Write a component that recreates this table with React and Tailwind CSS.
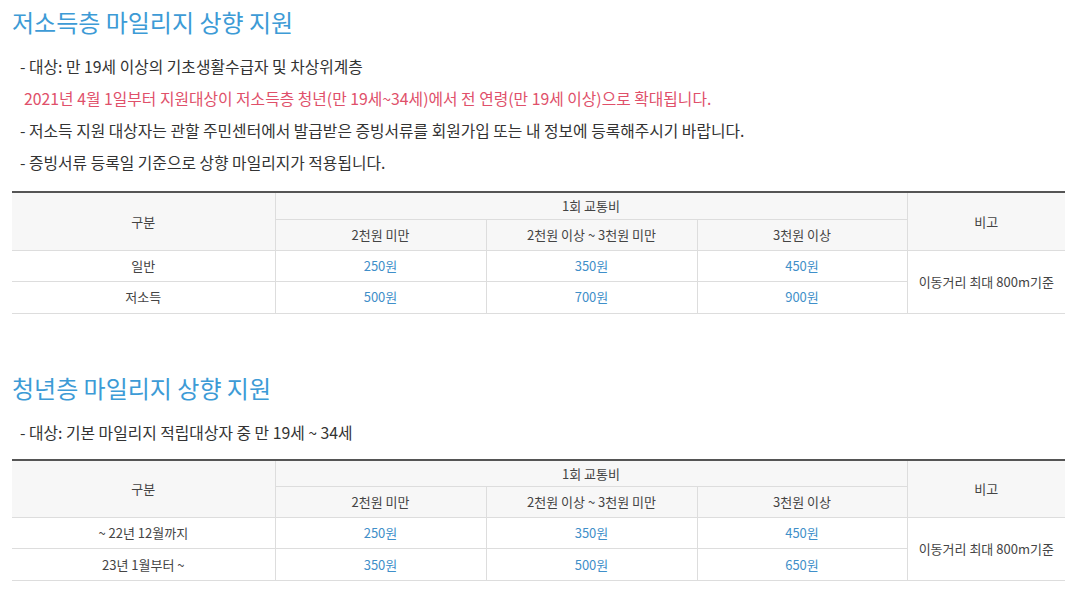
const font = { fontFamily: '"Noto Sans CJK KR", "Noto Sans", sans-serif' };

const tables = [
  {
    rows: [
      { label: '일반', values: ['250원', '350원', '450원'] },
      { label: '저소득', values: ['500원', '700원', '900원'] },
    ],
  },
  {
    rows: [
      { label: '~ 22년 12월까지', values: ['250원', '350원', '450원'] },
      { label: '23년 1월부터 ~', values: ['350원', '500원', '650원'] },
    ],
  },
];

function FareTable({ rows }) {
  const th = 'border border-[#dddddd] font-normal text-[13px] text-[#444]';
  const td = 'border border-[#dddddd] text-[13px] text-center';
  return (
    <table className="w-full table-fixed border-collapse border-t-2 border-t-[#555]">
      <colgroup>
        <col className="w-[263px]" />
        <col className="w-[211px]" />
        <col className="w-[211px]" />
        <col className="w-[210px]" />
        <col />
      </colgroup>
      <thead className="bg-[#f7f7f7]">
        <tr className="h-[27px]">
          <th rowSpan={2} className={`${th} border-l-0`}>구분</th>
          <th colSpan={3} className={th}>1회 교통비</th>
          <th rowSpan={2} className={`${th} border-r-0`}>비고</th>
        </tr>
        <tr className="h-[31px]">
          <th className={th}>2천원 미만</th>
          <th className={th}>2천원 이상 ~ 3천원 미만</th>
          <th className={th}>3천원 이상</th>
        </tr>
      </thead>
      <tbody>
        {rows.map((row, i) => (
          <tr key={row.label} className={i === 0 ? 'h-[31px]' : 'h-[32px]'}>
            <td className={`${td} border-l-0 text-[#444]`}>{row.label}</td>
            {row.values.map((v) => (
              <td key={v} className={`${td} text-[#3f8fc9]`}>{v}</td>
            ))}
            {i === 0 && (
              <td rowSpan={2} className={`${td} border-r-0 text-[#444]`}>
                이동거리 최대 800m기준
              </td>
            )}
          </tr>
        ))}
      </tbody>
    </table>
  );
}

export default function App() {
  return (
    <div className="min-h-screen bg-white px-[12px] pt-[6px]" style={font}>
      {/* 저소득층 */}
      <section>
        <h2 className="text-[24px] leading-[32px] text-[#3d9bd6]">저소득층 마일리지 상향 지원</h2>
        <div className="mt-[13px] text-[15.8px] leading-[32px] text-[#333]">
          <p className="pl-[8px]">- 대상: 만 19세 이상의 기초생활수급자 및 차상위계층</p>
          <p className="pl-[12px] text-[#e0506a]">
            2021년 4월 1일부터 지원대상이 저소득층 청년(만 19세~34세)에서 전 연령(만 19세 이상)으로 확대됩니다.
          </p>
          <p className="pl-[8px]">
            - 저소득 지원 대상자는 관할 주민센터에서 발급받은 증빙서류를 회원가입 또는 내 정보에 등록해주시기 바랍니다.
          </p>
          <p className="pl-[8px]">- 증빙서류 등록일 기준으로 상향 마일리지가 적용됩니다.</p>
        </div>
        <div className="mt-[12px]">
          <FareTable rows={tables[0].rows} />
        </div>
      </section>

      {/* 청년층 */}
      <section className="mt-[58px]">
        <h2 className="text-[24px] leading-[32px] text-[#3d9bd6]">청년층 마일리지 상향 지원</h2>
        <div className="mt-[13px] text-[15.8px] leading-[32px] text-[#333]">
          <p className="pl-[8px]">- 대상: 기본 마일리지 적립대상자 중 만 19세 ~ 34세</p>
        </div>
        <div className="mt-[10px]">
          <FareTable rows={tables[1].rows} />
        </div>
      </section>
    </div>
  );
}
